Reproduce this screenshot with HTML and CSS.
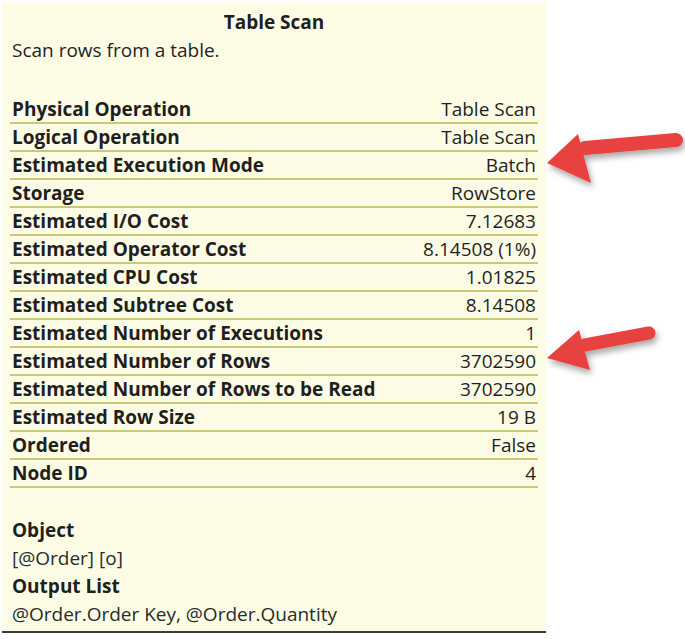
FILE: index.html
```html
<!DOCTYPE html>
<html lang="en">
<head>
    <meta charset="UTF-8">
    <title>Table Scan</title>
    <link rel="stylesheet" href="styles.css">
</head>
<body>
    <div class="tooltip">
        <div class="tip-title">Table Scan</div>
        <div class="tip-desc">Scan rows from a table.</div>

        <div class="props">
            <div class="row"><span class="name">Physical Operation</span><span class="val">Table Scan</span></div>
            <div class="row"><span class="name">Logical Operation</span><span class="val">Table Scan</span></div>
            <div class="row"><span class="name">Estimated Execution Mode</span><span class="val">Batch</span></div>
            <div class="row"><span class="name">Storage</span><span class="val">RowStore</span></div>
            <div class="row"><span class="name">Estimated I/O Cost</span><span class="val">7.12683</span></div>
            <div class="row"><span class="name">Estimated Operator Cost</span><span class="val">8.14508 (1%)</span></div>
            <div class="row"><span class="name">Estimated CPU Cost</span><span class="val">1.01825</span></div>
            <div class="row"><span class="name">Estimated Subtree Cost</span><span class="val">8.14508</span></div>
            <div class="row"><span class="name">Estimated Number of Executions</span><span class="val">1</span></div>
            <div class="row"><span class="name">Estimated Number of Rows</span><span class="val">3702590</span></div>
            <div class="row"><span class="name">Estimated Number of Rows to be Read</span><span class="val">3702590</span></div>
            <div class="row"><span class="name">Estimated Row Size</span><span class="val">19 B</span></div>
            <div class="row"><span class="name">Ordered</span><span class="val">False</span></div>
            <div class="row"><span class="name">Node ID</span><span class="val">4</span></div>
        </div>

        <div class="block">
            <div class="block-name">Object</div>
            <div class="block-val">[@Order] [o]</div>
            <div class="block-name">Output List</div>
            <div class="block-val">@Order.Order Key, @Order.Quantity</div>
        </div>
    </div>

    <!-- call-out arrows -->
    <svg class="arrow arrow-1" width="150" height="75" viewBox="0 0 150 75">
        <g filter="url(#shadow)" fill="#e8423f">
            <line x1="40" y1="28" x2="131" y2="20" stroke="#e8423f" stroke-width="14" stroke-linecap="round"/>
            <polygon points="2,43 33,14 46,63"/>
        </g>
        <defs>
            <filter id="shadow" x="-20%" y="-30%" width="140%" height="170%">
                <feDropShadow dx="2" dy="4" stdDeviation="3" flood-color="#000" flood-opacity="0.35"/>
            </filter>
        </defs>
    </svg>
    <svg class="arrow arrow-2" width="130" height="65" viewBox="0 0 130 65">
        <g filter="url(#shadow)" fill="#e8423f">
            <line x1="40" y1="29" x2="104" y2="17" stroke="#e8423f" stroke-width="13" stroke-linecap="round"/>
            <polygon points="2,42 34,14 45,54"/>
        </g>
    </svg>
</body>
</html>
```

FILE: styles.css
```css
body {
    margin: 0;
    background-color: #ffffff;
    font-family: "Open Sans", "Noto Sans", sans-serif;
    color: #1f1f1f;
    position: relative;
    width: 685px;
    height: 639px;
    overflow: hidden;
}

/* Подсказка плана */
.tooltip {
    margin: 3px 0 0 2px;
    width: 544px;
    height: 630px;
    box-sizing: border-box;
    background-color: #fdfde6;
    border-bottom: 2px solid #3c3c3c;
    padding: 7px 8px 0 8px;
    font-size: 19px;
}

.tip-title {
    text-align: center;
    font-weight: bold;
    line-height: 24px;
}

.tip-desc {
    line-height: 32px;
    margin-bottom: 30px;
    padding-left: 2px;
}

.row {
    display: flex;
    justify-content: space-between;
    height: 26px;
    line-height: 27px;
    border-bottom: 2px solid #c9c97c;
    padding: 0 2px;
}

.row .name {
    font-weight: bold;
}

.block {
    margin-top: 28px;
    padding-left: 2px;
}

.block-name {
    font-weight: bold;
    line-height: 28px;
}

.block-val {
    line-height: 28px;
    color: #2a2a2a;
}

/* Стрелки */
.arrow {
    position: absolute;
}

.arrow-1 {
    left: 545px;
    top: 120px;
}

.arrow-2 {
    left: 545px;
    top: 316px;
}
```
